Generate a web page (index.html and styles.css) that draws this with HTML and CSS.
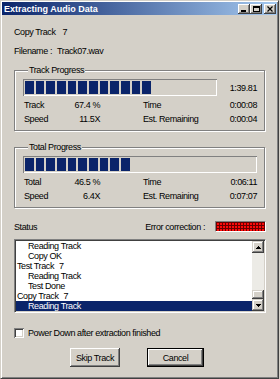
FILE: index.html
```html
<!DOCTYPE html>
<html lang="en">
<head>
    <meta charset="UTF-8">
    <meta name="viewport" content="width=device-width, initial-scale=1.0">
    <title>Extracting Audio Data</title>
    <link rel="stylesheet" href="styles.css">
</head>
<body>
    <div class="window">
        <div class="title-bar">
            <span class="title-text">Extracting Audio Data</span>
            <div class="caption-buttons">
                <span class="caption-btn">
                    <svg width="6" height="6" viewBox="0 0 6 6" shape-rendering="crispEdges"><rect x="0" y="4" width="5" height="2" fill="#000"/></svg>
                </span>
                <span class="caption-btn">
                    <svg width="7" height="6" viewBox="0 0 7 6" shape-rendering="crispEdges"><path d="M0 0h7v6h-7z M1 2v3h5v-3z" fill="#000" fill-rule="evenodd"/></svg>
                </span>
                <span class="caption-btn close">
                    <svg width="6" height="6" viewBox="0 0 6 6"><path d="M0.5 0.5L5.5 5.5M5.5 0.5L0.5 5.5" stroke="#000" stroke-width="1.2"/></svg>
                </span>
            </div>
        </div>

        <div class="content">
            <div class="info-line">Copy Track<span class="info-value wide">7</span></div>
            <div class="info-line second">Filename :<span class="info-value">Track07.wav</span></div>

            <!-- Track progress -->
            <fieldset class="group">
                <legend>Track Progress</legend>
                <div class="bar-row">
                    <div class="progress short">
                        <div class="progress-fill" style="width: 67.4%"></div>
                    </div>
                    <span class="bar-time">1:39.81</span>
                </div>
                <div class="stats">
                    <span>Track</span><span class="num">67.4 %</span><span class="label-right">Time</span><span class="num">0:00:08</span>
                    <span>Speed</span><span class="num">11.5X</span><span class="label-right">Est. Remaining</span><span class="num">0:00:04</span>
                </div>
            </fieldset>

            <!-- Total progress -->
            <fieldset class="group total">
                <legend>Total Progress</legend>
                <div class="bar-row">
                    <div class="progress">
                        <div class="progress-fill" style="width: 46.5%"></div>
                    </div>
                </div>
                <div class="stats">
                    <span>Total</span><span class="num">46.5 %</span><span class="label-right">Time</span><span class="num">0:06:11</span>
                    <span>Speed</span><span class="num">6.4X</span><span class="label-right">Est. Remaining</span><span class="num">0:07:07</span>
                </div>
            </fieldset>

            <div class="status-row">
                <span>Status</span>
                <span class="error-label">Error correction :</span>
                <span class="error-led"></span>
            </div>

            <div class="listbox">
                <ul class="log">
                    <li class="sub">Reading Track</li>
                    <li class="sub">Copy OK</li>
                    <li>Test Track<span class="track-no">7</span></li>
                    <li class="sub">Reading Track</li>
                    <li class="sub">Test Done</li>
                    <li>Copy Track<span class="track-no">7</span></li>
                    <li class="sub selected">Reading Track</li>
                </ul>
                <div class="scrollbar">
                    <span class="scroll-btn">
                        <svg width="5" height="3" viewBox="0 0 5 3" shape-rendering="crispEdges"><path d="M2 0h1v1h1v1h1v1h-5v-1h1v-1h1z" fill="#000"/></svg>
                    </span>
                    <span class="scroll-track"></span>
                    <span class="scroll-thumb"></span>
                    <span class="scroll-btn">
                        <svg width="5" height="3" viewBox="0 0 5 3" shape-rendering="crispEdges"><path d="M0 0h5v1h-1v1h-1v1h-1v-1h-1v-1h-1z" fill="#000"/></svg>
                    </span>
                </div>
            </div>

            <label class="check-row">
                <span class="checkbox"></span>
                Power Down after extraction finished
            </label>

            <div class="button-row">
                <button class="btn skip">Skip Track</button>
                <button class="btn cancel">Cancel</button>
            </div>
        </div>
    </div>
</body>
</html>
```

FILE: styles.css
```css
/* Classic dialog palette */
:root {
    --face: #d4d0c8;
    --shadow: #808080;
    --dark: #404040;
    --light: #ffffff;
    --navy: #0a246a;
    --title-end: #a6caf0;
}

* {
    margin: 0;
    padding: 0;
    box-sizing: border-box;
}

body {
    background: var(--face);
    font-family: 'Liberation Sans', Arial, sans-serif;
    font-size: 9px;
    letter-spacing: -0.4px;
    color: #000;
}

/* Window frame */
.window {
    width: 279px;
    height: 379px;
    border: 1px solid;
    border-color: var(--face) var(--dark) var(--dark) var(--face);
    box-shadow: inset 1px 1px 0 var(--light), inset -1px -1px 0 var(--shadow);
    padding: 1px;
    background: var(--face);
}

.title-bar {
    height: 13px;
    display: flex;
    align-items: center;
    justify-content: space-between;
    padding: 0 1px 0 2px;
    background: linear-gradient(to right, var(--navy), var(--title-end));
}

.title-text {
    color: #fff;
    font-weight: bold;
    letter-spacing: 0;
}

.caption-buttons {
    display: flex;
    margin-top: 1px;
}

.caption-btn {
    width: 12px;
    height: 10px;
    display: flex;
    align-items: center;
    justify-content: center;
    background: var(--face);
    box-shadow: inset -1px -1px 0 var(--dark), inset 1px 1px 0 var(--light), inset -2px -2px 0 var(--shadow);
}

.caption-btn.close {
    margin-left: 2px;
}

/* Content */
.content {
    padding: 11px 12px 0;
}

.info-line {
    line-height: 12px;
}

.info-line.second {
    margin-top: 7px;
}

.info-value {
    margin-left: 5px;
}

.info-value.wide {
    margin-left: 7px;
}

/* Group boxes */
.group {
    margin-top: 8px;
    border: 1px solid var(--shadow);
    box-shadow: inset 1px 1px 0 var(--light), 1px 1px 0 var(--light);
    padding: 0 7px 4px 8px;
    min-width: 0;
}

.group.total {
    margin-top: 11px;
}

.group legend {
    line-height: 10px;
    padding: 0 1px;
    margin-left: 5px;
    background: var(--face);
}

.bar-row {
    display: flex;
    align-items: center;
    margin-top: 4px;
}

.progress {
    flex: 1;
    height: 17px;
    padding: 2px;
    box-shadow: inset 1px 1px 0 var(--shadow), inset -1px -1px 0 var(--light);
}

.progress.short {
    flex: 0 0 194px;
}

.progress-fill {
    height: 100%;
    background: repeating-linear-gradient(to right, var(--navy) 0 8.7px, transparent 8.7px 10.67px);
}

.bar-time {
    margin-left: auto;
}

.stats {
    display: grid;
    grid-template-columns: 40px 36px 1fr auto;
    line-height: 14px;
    margin-top: 2px;
    padding-left: 1px;
}

.stats .num {
    text-align: right;
}

.stats .label-right {
    padding-left: 43px;
}

/* Status */
.status-row {
    display: flex;
    align-items: center;
    height: 12px;
    margin-top: 13px;
}

.error-label {
    margin-left: auto;
}

.error-led {
    width: 51px;
    height: 11px;
    margin: -1px -1px 0 10px;
    border: 1px solid;
    border-color: var(--shadow) var(--light) var(--light) var(--shadow);
    background-color: #ff0a0a;
    background-image:
        repeating-linear-gradient(to right, #6a0000 0 1px, transparent 1px 3px),
        repeating-linear-gradient(to bottom, #6a0000 0 1px, transparent 1px 3px);
}

/* Log list */
.listbox {
    display: flex;
    margin: 6px -1px 0 0;
    height: 74px;
    background: #fff;
    border: 1px solid;
    border-color: var(--shadow) var(--light) var(--light) var(--shadow);
    box-shadow: inset 1px 1px 0 var(--dark), inset -1px -1px 0 var(--face);
    padding: 1px;
}

.log {
    flex: 1;
    list-style: none;
    line-height: 10px;
}

.log li {
    padding-left: 1px;
    white-space: nowrap;
}

.log li.sub {
    padding-left: 12px;
}

.log li.selected {
    background: var(--navy);
    color: #fff;
}

.track-no {
    margin-left: 5px;
}

.scrollbar {
    width: 12px;
    display: flex;
    flex-direction: column;
}

.scroll-btn,
.scroll-thumb {
    height: 12px;
    display: flex;
    align-items: center;
    justify-content: center;
    background: var(--face);
    box-shadow: inset -1px -1px 0 var(--dark), inset 1px 1px 0 var(--face), inset -2px -2px 0 var(--shadow), inset 2px 2px 0 var(--light);
}

.scroll-thumb {
    height: 9px;
}

.scroll-track {
    flex: 1;
    background: #ecebe6;
}

/* Checkbox */
.check-row {
    display: flex;
    align-items: center;
    height: 12px;
    margin-top: 14px;
}

.checkbox {
    width: 10px;
    height: 10px;
    margin-right: 4px;
    background: #fff;
    box-shadow: inset 1px 1px 0 var(--shadow), inset -1px -1px 0 var(--light), inset 2px 2px 0 var(--dark), inset -2px -2px 0 var(--face);
}

/* Buttons */
.button-row {
    display: flex;
    justify-content: center;
    gap: 27px;
    margin-top: 9px;
    padding-right: 5px;
}

.btn {
    height: 19px;
    font: inherit;
    letter-spacing: inherit;
    color: #000;
    background: var(--face);
    border: none;
    box-shadow: inset -1px -1px 0 var(--dark), inset 1px 1px 0 var(--light), inset -2px -2px 0 var(--shadow), inset 2px 2px 0 var(--face);
}

.btn.skip {
    width: 50px;
}

.btn.cancel {
    width: 57px;
    border: 1px solid #000;
}
```
